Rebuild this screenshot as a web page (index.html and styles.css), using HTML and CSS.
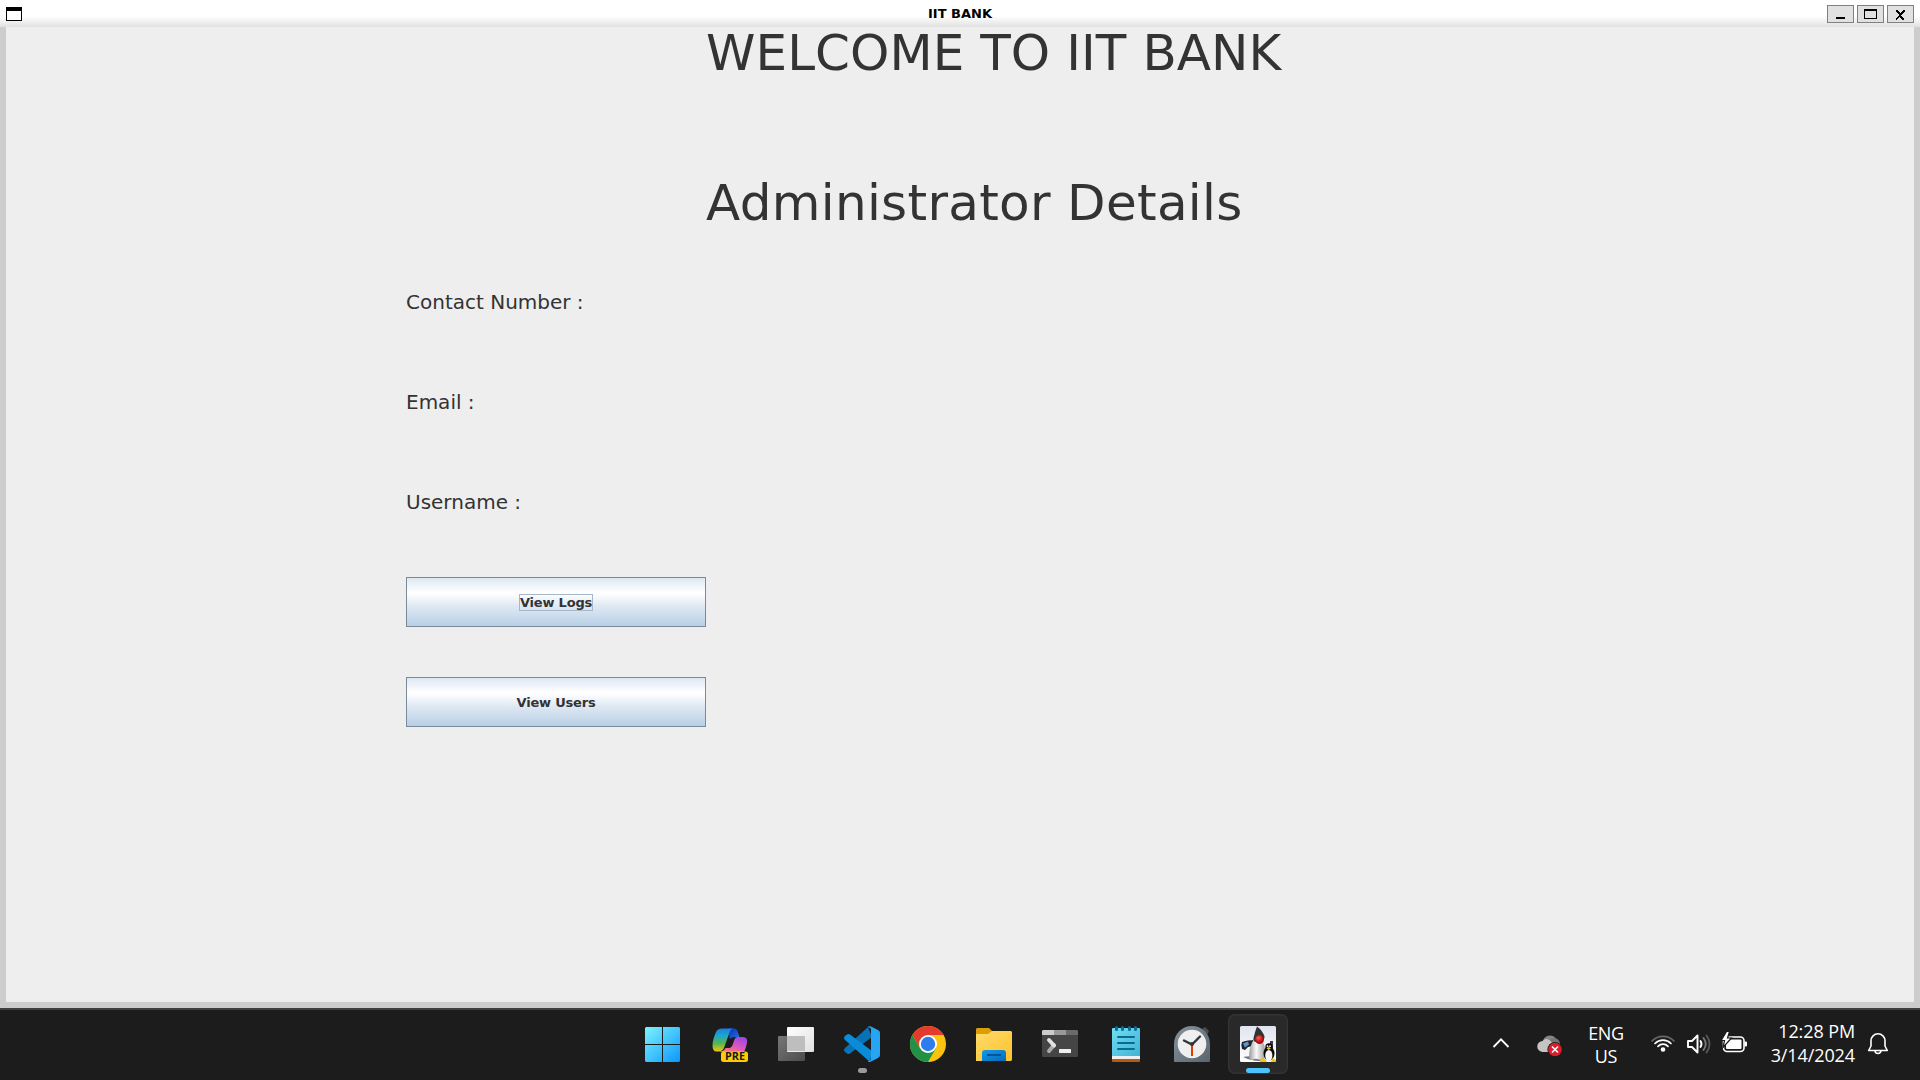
FILE: index.html
```html
<!DOCTYPE html>
<html lang="en">
<head>
<meta charset="utf-8">
<title>IIT BANK</title>
<link rel="stylesheet" href="styles.css">
</head>
<body>
<div class="window">
  <header class="titlebar">
    <svg class="menu-icon" width="16" height="14" shape-rendering="crispEdges"><rect width="16" height="14" fill="#000"/><rect x="1" y="4" width="14" height="9" fill="#fff"/></svg>
    <span class="title">IIT BANK</span>
    <div class="controls">
      <button class="control" aria-label="Minimize"><svg width="27" height="18" shape-rendering="crispEdges"><path d="M9 12h9v2H9z"/></svg></button>
      <button class="control" aria-label="Maximize"><svg width="27" height="18" shape-rendering="crispEdges"><path fill-rule="evenodd" d="M7 4h13v10H7zM8 6v7h11V6z"/></svg></button>
      <button class="control" aria-label="Close"><svg width="27" height="18" shape-rendering="crispEdges"><path d="M9 5h2v1h1v1h1v1h1V7h1V6h1V5h2v2h-1v1h-1v1h-1v1h-1v1h1v1h1v1h1v2h-2v-1h-1v-1h-1v-1h-1v1h-1v1h-1v1H9v-2h1v-1h1v-1h1V9h-1V8h-1V7H9z"/></svg></button>
    </div>
  </header>
  <main class="content">
    <h1 class="heading welcome">WELCOME TO IIT BANK</h1>
    <h2 class="heading details">Administrator Details</h2>
    <div class="label contact">Contact Number :</div>
    <div class="label email">Email :</div>
    <div class="label username">Username :</div>
    <button class="action"><span class="focus">View Logs</span></button>
    <button class="action"><span class="plain">View Users</span></button>
  </main>
</div>
<footer class="taskbar">
  <nav class="apps">
    <svg class="app" viewBox="0 0 60 60">
      <defs><linearGradient id="win" gradientUnits="userSpaceOnUse" x1="11" y1="13" x2="46" y2="48"><stop offset="0" stop-color="#7cf3ff"/><stop offset="1" stop-color="#0c97fb"/></linearGradient></defs>
      <path fill="url(#win)" d="M12 13h16v17H11V14zM29 13h16l1 1v16H29zM11 31h17v17H12l-1-1zM29 31h17v16l-1 1H29z"/>
    </svg>
    <svg class="app" viewBox="0 0 60 60">
      <defs>
        <linearGradient id="cpA" x1="0" y1="0" x2="0" y2="1"><stop offset="0" stop-color="#1b7de0"/><stop offset=".3" stop-color="#1ba6cf"/><stop offset=".65" stop-color="#55b64c"/><stop offset="1" stop-color="#f4c60c"/></linearGradient>
        <linearGradient id="cpB" x1=".8" y1="0" x2=".2" y2="1"><stop offset="0" stop-color="#9a48e8"/><stop offset=".5" stop-color="#d955c1"/><stop offset="1" stop-color="#ff7a70"/></linearGradient>
        <linearGradient id="cpC" x1="0" y1="0" x2="1" y2="1"><stop offset="0" stop-color="#0a2cae"/><stop offset="1" stop-color="#2374e5"/></linearGradient>
      </defs>
      <path fill="url(#cpC)" d="M28 14.500h6q3 0 4 4l1.500 4.500h-5q-3 0-4.500 2z"/>
      <path fill="url(#cpA)" d="M22 14.500h12q-3 0-4.500 4l-5 14q-1.500 5-6 5h-2q-4 0-4-6c0-5 2-10 3.500-13.500q1.500-3.500 6-3.500z"/>
      <path fill="url(#cpB)" d="M37 23h6q5 0 4 6-1 5-3 9H24q-4 0-5-.5 5 0 6.500-3.500h4q2 0 3-3l2-5.500q.7-2.500 2.500-2.500z"/>
      <rect x="21" y="37.500" width="27" height="10.500" rx="2.500" fill="#ffca08"/>
      <text x="25" y="46.300" font-family="Open Sans, sans-serif" font-size="9.800" font-weight="700" textLength="20" lengthAdjust="spacingAndGlyphs" fill="#191919">PRE</text>
    </svg>
    <svg class="app" viewBox="0 0 60 60">
      <defs><linearGradient id="tvA" x1="0" y1="0" x2="1" y2="1"><stop offset="0" stop-color="#fff"/><stop offset="1" stop-color="#e0e0e0"/></linearGradient>
      <linearGradient id="tvB" x1="0" y1="0" x2="1" y2="1"><stop offset="0" stop-color="#777"/><stop offset="1" stop-color="#4c4c4c"/></linearGradient></defs>
      <rect x="12" y="22" width="27" height="25" rx="1" fill="url(#tvB)"/>
      <rect x="21" y="13" width="27" height="25" rx="1" fill="url(#tvA)"/>
      <path fill="#bebebe" d="M21 22h17q1 0 1 1v14H22q-1 0-1-1z"/>
    </svg>
    <svg class="app" viewBox="0 0 60 60">
      <path fill="#0872b5" d="M36 13 13 34q-2 2 0 4l2 1.500q1.500 1 3 0L40 23z"/>
      <path fill="#0a8cd8" d="M13 22l2-1.500q1.500-1 3 0L40 37l-2 11-25-22q-2-2 0-4z"/>
      <path fill="#27a5f2" d="M38.500 12.300 46 16q2 1 2 3v22q0 2-2 3l-7.500 3.700q-2 .7-3-1 3.500 1 3.500-2.700V16q0-3-3.500-2.700 1-1.500 3-1z"/>
      <rect x="26" y="54" width="9" height="5" rx="2.500" fill="#9b9b9b"/>
    </svg>
    <svg class="app" viewBox="0 0 60 60">
      <circle cx="30" cy="30" r="18" fill="#fcc30e"/>
      <path fill="#e33b2e" d="M14.400 21A18 18 0 0 1 45.600 21H30v9l-8 4z"/>
      <path fill="#219245" d="M14.400 21A18 18 0 0 0 30 48l7.800-13.500L30 30l-7.800 4.500z"/>
      <circle cx="30" cy="30" r="9" fill="#fff"/><circle cx="30" cy="30" r="7.200" fill="#2f7ded"/>
    </svg>
    <svg class="app" viewBox="0 0 60 60">
      <defs><linearGradient id="fold" x1="0" y1="0" x2="1" y2="1"><stop offset="0" stop-color="#ffdc6b"/><stop offset="1" stop-color="#fdc22d"/></linearGradient>
      <linearGradient id="foldB" x1="0" y1="0" x2="1" y2="1"><stop offset="0" stop-color="#129be8"/><stop offset="1" stop-color="#0869bd"/></linearGradient></defs>
      <path fill="#dd9d05" d="M13 14h12l3 3v6H12v-8z"/>
      <path fill="url(#fold)" d="M12 20h12l4-3h19l1 1v28l-1 1H12z"/>
      <path fill="url(#foldB)" d="M18 47V39q0-3 3-3h18q3 0 3 3v8z"/><path fill="#08529a" d="M23 40h14v2H23z"/>
    </svg>
    <svg class="app" viewBox="0 0 60 60">
      <rect x="12" y="16" width="36" height="27" rx="1.500" fill="#454545"/>
      <path fill="#ccc" d="M13 16h11v5H12v-4z"/><path fill="#999" d="M24 16h12v5H24z"/><path fill="#6b6b6b" d="M36 16h11l1 1v4H36z"/>
      <path fill="none" stroke="#aaa" stroke-width="4" stroke-linecap="round" d="m19 37 5-6"/>
      <path fill="none" stroke="#e2e2e2" stroke-width="4" stroke-linecap="round" d="m19 26 5 5.500"/>
      <rect x="29" y="35" width="12" height="4" rx=".5" fill="#eee"/>
    </svg>
    <svg class="app" viewBox="0 0 60 60">
      <defs><linearGradient id="note" x1="0" y1="0" x2="1" y2="1"><stop offset="0" stop-color="#72ddf3"/><stop offset="1" stop-color="#40b2d5"/></linearGradient></defs>
      <rect x="16" y="38" width="28" height="10" rx="1" fill="#b65a12"/><rect x="16" y="38" width="28" height="7" fill="#eee"/>
      <path fill="url(#note)" d="M17 14h26q1 0 1 1v27H16V15q0-1 1-1z"/>
      <g stroke="#086b91" stroke-width="2" stroke-linecap="round"><path d="M22 23h16M22 29h16M22 35h16"/></g>
      <g fill="#086f98"><rect x="19" y="12" width="3" height="5" rx="1.500"/><rect x="25" y="12" width="3" height="5" rx="1.500"/><rect x="32" y="12" width="3" height="5" rx="1.500"/><rect x="38" y="12" width="3" height="5" rx="1.500"/></g>
    </svg>
    <svg class="app" viewBox="0 0 60 60">
      <defs><linearGradient id="clk" x1="0" y1="0" x2="1" y2="1"><stop offset="0" stop-color="#87939d"/><stop offset="1" stop-color="#5a656d"/></linearGradient></defs>
      <path fill="#4a4d50" d="m40 15 3-2 4 4-2 4z"/>
      <path fill="url(#clk)" d="M12 30a18 18 0 0 1 36 0v17q0 1-1 1H13q-1 0-1-1z"/>
      <circle cx="30" cy="30" r="14.300" fill="#efefef"/>
      <path fill="none" stroke="#31363a" stroke-width="2.400" stroke-linecap="round" d="m22 26.500 8 4 8-8"/>
      <path stroke="#e33a00" stroke-width="2" d="M30 30v12"/><circle cx="30" cy="30" r="2" fill="#31363a"/>
    </svg>
    <svg class="app active" viewBox="0 0 60 60">
      <defs><radialGradient id="ball" cx=".4" cy=".3"><stop offset="0" stop-color="#ff5b50"/><stop offset="1" stop-color="#b40a12"/></radialGradient>
      <linearGradient id="jbg" x1="0" y1="0" x2="0" y2="1"><stop offset="0" stop-color="#dfe4f0"/><stop offset="1" stop-color="#fff"/></linearGradient>
      <linearGradient id="body" x1="0" y1="0" x2="1" y2="0"><stop offset="0" stop-color="#9a9a9e"/><stop offset=".45" stop-color="#fafafa"/><stop offset="1" stop-color="#9c9ca0"/></linearGradient></defs>
      <rect x="12" y="12" width="36" height="36" rx="1.500" fill="url(#jbg)"/>
      <path fill="#23262c" d="M27 26q-8 0-13 2-1.500 3 0 7l3 1 3-3 6-1z"/><path fill="#5f97c4" d="m15 29.500 5-2 1 3-4 3z"/>
      <path fill="#777980" d="M15 43q9-2 20 2l-3 2q-9 0-17-4z"/>
      <path fill="url(#body)" d="M26 25q-5 8-5 18 1 4 4 2.500 3-1.500 6 0 5 1.500 6-2.500 1-9-2-15z"/>
      <path fill="#313236" d="M29 12.500q-2 5-3.500 11.500-.5 3 2 4h6q3-1.500 3-5.500-2-6-7.500-10z"/>
      <circle cx="31.500" cy="25.700" r="4.400" fill="url(#ball)"/>
      <path fill="#3b3c40" d="M42 27h3v7h-3z"/>
      <ellipse cx="41" cy="39.500" rx="5.500" ry="7" fill="#080808"/><circle cx="41" cy="33" r="3.700" fill="#080808"/>
      <ellipse cx="40.800" cy="41.500" rx="3.600" ry="5.500" fill="#f7f7f7"/>
      <circle cx="39.500" cy="32.200" r=".9" fill="#fff"/><circle cx="42" cy="32.200" r=".9" fill="#fff"/>
      <path fill="#f6c408" d="m38.500 34.200 2.200-1.200 2.300 1.200-2.300 1.800zM34 44l3 1 2 3h-7.500zM44.500 44l3.500 2v2h-5z"/>
      <rect x="18" y="54" width="24" height="5" rx="2.500" fill="#4cc2ff"/>
    </svg>
  </nav>
  <div class="tray">
    <svg class="chevron" width="18" height="12"><path fill="none" stroke="#fff" stroke-width="1.800" d="m1.500 10 7.500-7.600 7.500 7.600"/></svg>
    <svg class="cloud" width="26" height="22"><circle cx="13" cy="8" r="7.500" fill="#858585"/><circle cx="17" cy="9" r="6" fill="#777"/><path fill="#c4c4c4" d="M6 17a5.500 5.500 0 0 1-.5-11q3-3.500 7-1l4 4v8z"/><circle cx="18" cy="14.500" r="7.600" fill="#1c1c1c"/><circle cx="18" cy="14.500" r="6.800" fill="#d91e2b"/><path stroke="#fff" stroke-width="1.600" d="m15 11.500 6 6m0-6-6 6"/></svg>
    <div class="lang">ENG<br>US</div>
    <svg class="wifi" width="24" height="20"><g fill="none" stroke="#fff" stroke-width="1.700" stroke-linecap="round"><path stroke="#666" d="M1 8a15.500 15.500 0 0 1 22 0"/><path d="M4 10.500a11.300 11.300 0 0 1 16 0M7 13.300a7 7 0 0 1 10 0"/></g><circle cx="12" cy="16.500" r="2.300" fill="#fff"/></svg>
    <svg class="speaker" width="24" height="22"><g fill="none" stroke="#fff" stroke-width="1.900" stroke-linejoin="round" stroke-linecap="round"><path d="M1 8h4l5.500-5.500v17L5 14H1zM13.500 8q2 3 0 6"/><path stroke="#777" d="M16.500 5q4.500 6 0 12"/><path stroke="#555" d="M19.500 2.500q6 8.500 0 17"/></g></svg>
    <svg class="battery" width="26" height="22"><rect x="1.500" y="5" width="20.500" height="14.500" rx="3.500" fill="none" stroke="#fff" stroke-width="1.600"/><rect x="4" y="7.500" width="15.500" height="9.500" rx="1" fill="#fff"/><rect x="22.500" y="9.500" width="2.500" height="5" rx="1" fill="#fff"/><path fill="#fff" stroke="#1c1c1c" stroke-width="1.200" d="M4.500-.5-.8 8.500H2.500L1 15.500 9.500 6h-4L7.500-.5z"/></svg>
    <time class="clock">12:28 PM<br>3/14/2024</time>
    <svg class="bell" width="22" height="24"><g fill="none" stroke="#fff" stroke-width="1.600" stroke-linejoin="round"><path d="M11 1.800a7 7 0 0 0-7 7V14l-2.300 4.500h18.600L18 14V8.800a7 7 0 0 0-7-7z"/><path d="M8 18.500a3 3 0 0 0 6 0"/></g></svg>
  </div>
</footer>
</body>
</html>
```
FILE: styles.css
```css
* { box-sizing: border-box; }
body {
  margin: 0;
  width: 1920px;
  height: 1080px;
  overflow: hidden;
  display: flex;
  flex-direction: column;
  font-family: "DejaVu Sans", sans-serif;
  background: #1c1c1c;
}
svg { display: block; flex: none; }
button { padding: 0; font: inherit; }

.window {
  height: 1008px;
  display: flex;
  flex-direction: column;
  background: #ccc;
}
.titlebar {
  height: 27px;
  display: grid;
  grid-template-columns: 1fr auto 1fr;
  padding: 0 6px;
  background: linear-gradient(#fff 16px, #e1e1e1 27px);
}
.menu-icon { margin-top: 7px; }
.title {
  font-size: 13px;
  font-weight: bold;
  line-height: 27px;
  color: #000;
}
.controls {
  display: flex;
  justify-content: flex-end;
  gap: 3px;
  padding-top: 5px;
}
.control {
  width: 27px;
  height: 18px;
  border: 0;
  background: #e1e1e1;
  box-shadow: inset 0 0 0 1px #808080;
}

.content {
  margin: 0 6px;
  height: 975px;
  padding: 0 400px;
  background: #eee;
  color: #333;
  display: flex;
  flex-direction: column;
  gap: 50px;
}
.heading {
  margin: 0 0 0 300px;
  height: 50px;
  font-size: 50px;
  font-weight: normal;
  line-height: 52px;
  white-space: nowrap;
}
.welcome {
  margin-bottom: 50px;
  letter-spacing: 0.060px;
}
.details { letter-spacing: 0.310px; }
.label {
  height: 50px;
  font-size: 20px;
  line-height: 50px;
}
.action {
  width: 300px;
  height: 50px;
  display: flex;
  align-items: center;
  justify-content: center;
  border: 1px solid #7a8a99;
  background: linear-gradient(#dde8f3, #fff 30%, #fff 32%, #dde8f3 60%, #b8cfe5);
  color: #333;
  font-size: 13px;
  font-weight: bold;
  letter-spacing: -0.200px;
}
.focus {
  border: 1px solid #a3b8cc;
  height: 17px;
  line-height: 15px;
}

.taskbar {
  height: 72px;
  border-top: 2px solid #404040;
  display: flex;
  padding-left: 634px;
  color: #fff;
  font-family: "Open Sans", sans-serif;
}
.apps {
  display: flex;
  gap: 6px;
  padding-top: 4px;
}
.app { width: 60px; height: 60px; }
.active {
  background: #292929;
  border-radius: 7px;
  box-shadow: inset 0 0 0 1.500px #333;
}
.tray {
  flex: 1;
  display: flex;
  align-items: flex-start;
  padding-left: 204px;
}
.chevron { margin-top: 27px; }
.cloud { margin: 25px 0 0 27px; }
.lang, .clock {
  font-size: 18px;
  line-height: 24px;
  white-space: nowrap;
}
.lang {
  width: 50px;
  margin: 12px 0 0 18px;
  line-height: 23px;
  letter-spacing: -0.300px;
  text-align: center;
}
.wifi { margin: 23px 0 0 20px; }
.speaker { margin: 23px 0 0 12px; }
.battery { margin: 22px 0 0 11px; }
.clock {
  width: 90px;
  margin: 9px 0 0 17px;
  letter-spacing: -0.100px;
  text-align: right;
}
.bell { margin: 22px 0 0 12px; }
```
